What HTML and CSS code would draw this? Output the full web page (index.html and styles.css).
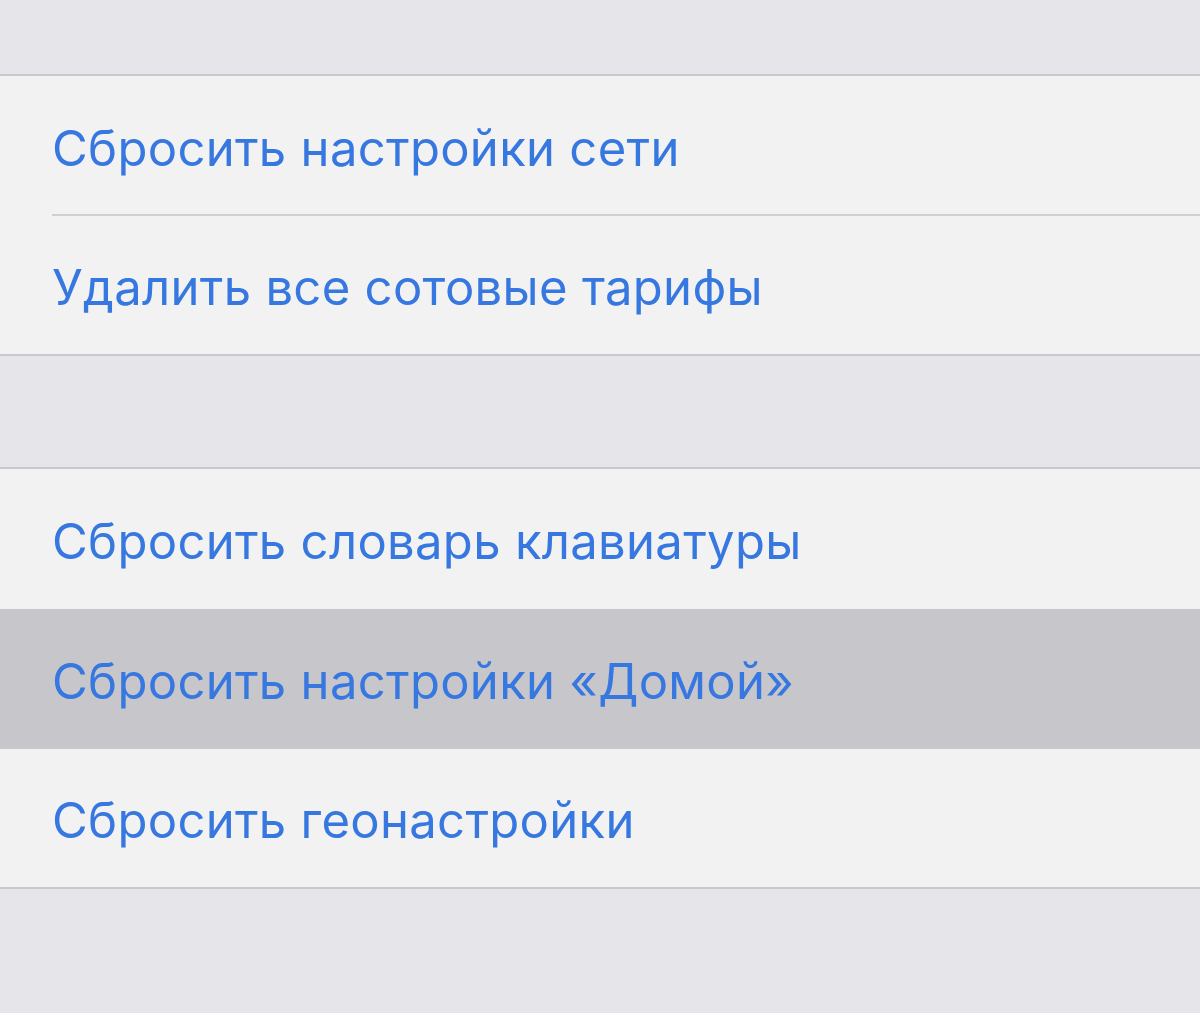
FILE: index.html
```html
<!DOCTYPE html>
<html lang="ru">
<head>
<meta charset="utf-8">
<link rel="stylesheet" href="styles.css">
</head>
<body>
<div class="page">
  <div class="group">
    <div class="row">Сбросить настройки сети</div>
    <div class="row last">Удалить все сотовые тарифы</div>
  </div>
  <div class="group">
    <div class="row before-active">Сбросить словарь клавиатуры</div>
    <div class="row active">Сбросить настройки «Домой»</div>
    <div class="row last">Сбросить геонастройки</div>
  </div>
</div>
</body>
</html>
```
FILE: styles.css
```css
html, body {
  margin: 0;
  padding: 0;
  background: #e6e5ea;
}
.page {
  width: 1200px;
  height: 1013px;
  padding-top: 74px;
  box-sizing: border-box;
  display: flex;
  flex-direction: column;
  gap: 111px;
  font-family: "Inter", "Roboto", "Liberation Sans", sans-serif;
}
.group {
  background: #f2f2f2;
  border-top: 2px solid #c9c8cd;
  border-bottom: 2px solid #c9c8cd;
}
.row {
  height: 138px;
  box-sizing: border-box;
  display: flex;
  align-items: center;
  padding-left: 52px;
  padding-top: 5px;
  font-size: 49px;
  color: #3677e0;
  letter-spacing: 0.3px;
}
.row:not(.last) {
  height: 140px;
  background-image: linear-gradient(#d0cfd4, #d0cfd4);
  background-repeat: no-repeat;
  background-size: calc(100% - 52px) 2px;
  background-position: 52px 100%;
}
.row.before-active {
  background-image: none;
}
.row.active {
  background: #c7c6cb;
}
```
